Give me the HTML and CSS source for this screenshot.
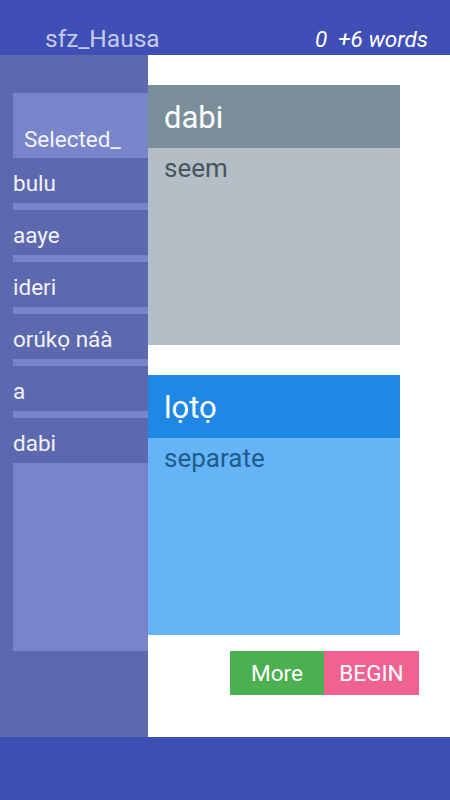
FILE: index.html
```html
<!DOCTYPE html>
<html>
<head>
<meta charset="utf-8">
<link rel="stylesheet" href="styles.css">
</head>
<body>
<div class="app">
  <header class="topbar">
    <span class="title">sfz_Hausa</span>
    <span class="count">0&nbsp;&nbsp;+6 words</span>
  </header>
  <main class="main">
    <aside class="side">
      <div class="selected">Selected_</div>
      <div class="item">bulu</div>
      <div class="sep"></div>
      <div class="item">aaye</div>
      <div class="sep"></div>
      <div class="item">ideri</div>
      <div class="sep"></div>
      <div class="item">orúkọ náà</div>
      <div class="sep"></div>
      <div class="item">a</div>
      <div class="sep"></div>
      <div class="item">dabi</div>
      <div class="tail"></div>
    </aside>
    <section class="content">
      <div class="card grey">
        <div class="card-head"><span class="word">dabi</span><span class="ghost">seem</span></div>
        <div class="card-body">seem</div>
      </div>
      <div class="card blue">
        <div class="card-head"><span class="word">lọtọ</span><span class="ghost">sep</span></div>
        <div class="card-body">separate</div>
      </div>
      <div class="actions">
        <button class="btn more">More</button>
        <button class="btn begin">BEGIN</button>
      </div>
    </section>
  </main>
  <footer class="bottombar"></footer>
</div>
</body>
</html>
```
FILE: styles.css
```css
html, body {
  margin: 0;
  padding: 0;
}
body {
  font-family: Roboto, "Noto Sans", "Liberation Sans", sans-serif;
  background: #ffffff;
}
.app {
  width: 450px;
  height: 800px;
  display: flex;
  flex-direction: column;
  overflow: hidden;
}
.topbar {
  height: 55px;
  flex: none;
  background: #3f4fb6;
  display: flex;
  align-items: flex-end;
  justify-content: space-between;
  padding: 0 22px 1px 45px;
  box-sizing: border-box;
}
.title {
  font-size: 24.5px;
  color: #c5cae9;
  line-height: 30px;
}
.count {
  font-size: 22.5px;
  font-style: italic;
  color: #ffffff;
  line-height: 30px;
}
.main {
  flex: 1;
  display: flex;
  min-height: 0;
}
.side {
  width: 148px;
  flex: none;
  background: #5d69ae;
  padding: 38px 0 0 13px;
  box-sizing: border-box;
  display: flex;
  flex-direction: column;
}
.selected {
  height: 65px;
  background: #7985cb;
  color: #f3f4fb;
  font-size: 22.5px;
  padding-left: 11px;
  box-sizing: border-box;
  display: flex;
  align-items: flex-end;
  padding-bottom: 6px;
}
.item {
  height: 45px;
  color: #f1f2fa;
  font-size: 22.5px;
  display: flex;
  align-items: center;
  padding-top: 4px;
  box-sizing: border-box;
}
.sep {
  height: 7px;
  background: #7985cb;
}
.tail {
  height: 188px;
  background: #7985cb;
}
.content {
  flex: 1;
  display: flex;
  flex-direction: column;
  padding-top: 30px;
}
.card {
  width: 252px;
  height: 260px;
  display: flex;
  flex-direction: column;
}
.card + .card {
  margin-top: 30px;
}
.card-head {
  height: 63px;
  flex: none;
  display: flex;
  align-items: center;
  justify-content: space-between;
  padding: 2px 8px 0 16px;
  box-sizing: border-box;
}
.word {
  font-size: 31px;
  color: #ffffff;
}
.ghost {
  font-size: 20px;
  color: rgba(0, 0, 0, 0.015);
}
.card-body {
  flex: 1;
  font-size: 26px;
  padding: 2px 0 0 16px;
  line-height: 36px;
}
.grey .card-head { background: #7a8f9a; }
.grey .card-body { background: #b3bec7; color: #4a555c; }
.blue .card-head { background: #1f88e5; }
.blue .card-body { background: #64b4f6; color: #1e5b8e; }
.actions {
  display: flex;
  margin-top: 16px;
  margin-left: 82px;
}
.btn {
  border: none;
  height: 44px;
  font-family: inherit;
  font-size: 22.5px;
  color: #ffffff;
  padding: 0;
  margin: 0;
}
.more {
  width: 94px;
  background: #4caf50;
}
.begin {
  width: 95px;
  background: #f06292;
}
.bottombar {
  height: 63px;
  flex: none;
  background: #3f50b5;
}
```
